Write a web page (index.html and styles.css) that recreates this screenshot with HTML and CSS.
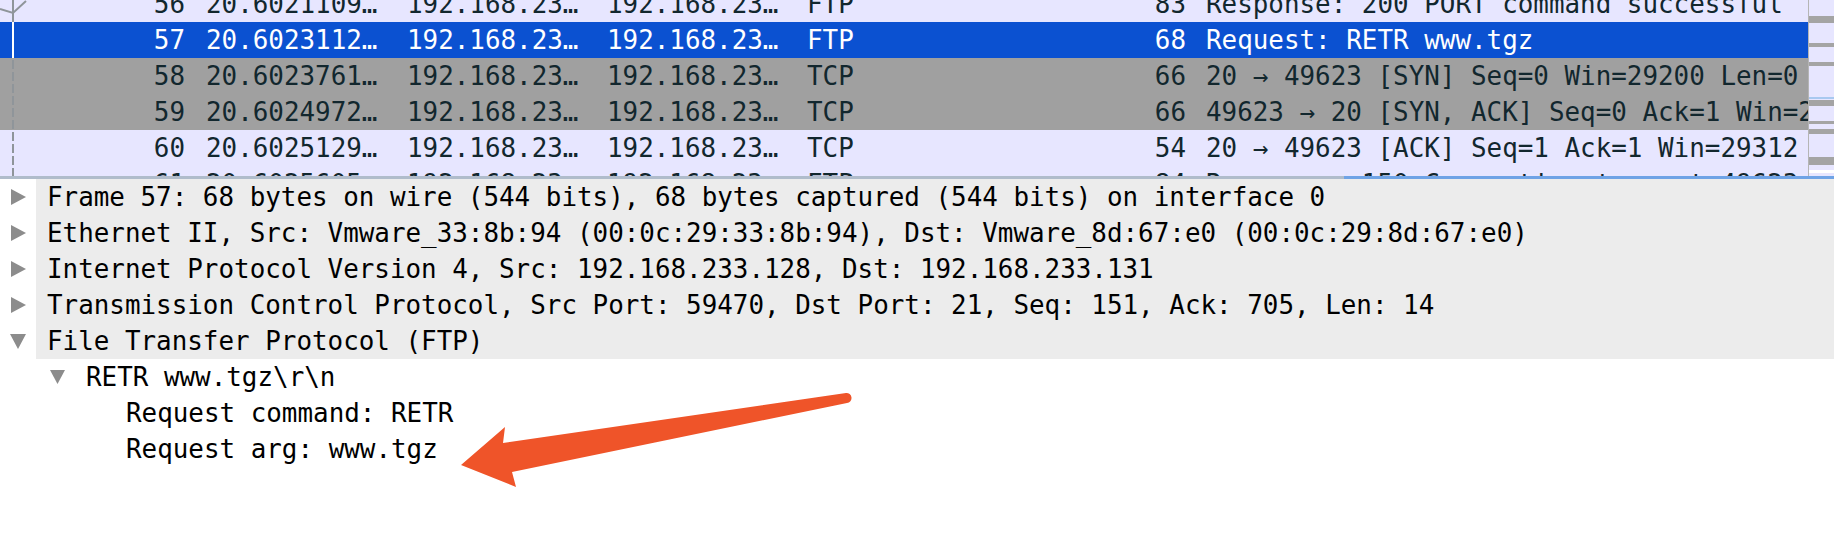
FILE: index.html
```html
<!DOCTYPE html>
<html>
<head>
<meta charset="utf-8">
<link rel="stylesheet" href="styles.css">
</head>
<body>
<div class="app">
  <div class="plist">
    <div class="plist-view">
      <div class="rows">
        <div class="row tcp"><span class="c no">56</span><span class="c time">20.6021109…</span><span class="c src">192.168.23…</span><span class="c dst">192.168.23…</span><span class="c proto">FTP</span><span class="c len">83</span><span class="c info">Response: 200 PORT command successful</span></div>
        <div class="row sel"><span class="c no">57</span><span class="c time">20.6023112…</span><span class="c src">192.168.23…</span><span class="c dst">192.168.23…</span><span class="c proto">FTP</span><span class="c len">68</span><span class="c info">Request: RETR www.tgz</span></div>
        <div class="row syn"><span class="c no">58</span><span class="c time">20.6023761…</span><span class="c src">192.168.23…</span><span class="c dst">192.168.23…</span><span class="c proto">TCP</span><span class="c len">66</span><span class="c info">20 → 49623 [SYN] Seq=0 Win=29200 Len=0 MSS=1460 SACK_PERM=1 WS=128</span></div>
        <div class="row syn"><span class="c no">59</span><span class="c time">20.6024972…</span><span class="c src">192.168.23…</span><span class="c dst">192.168.23…</span><span class="c proto">TCP</span><span class="c len">66</span><span class="c info">49623 → 20 [SYN, ACK] Seq=0 Ack=1 Win=29200 Len=0 MSS=1460</span></div>
        <div class="row tcp"><span class="c no">60</span><span class="c time">20.6025129…</span><span class="c src">192.168.23…</span><span class="c dst">192.168.23…</span><span class="c proto">TCP</span><span class="c len">54</span><span class="c info">20 → 49623 [ACK] Seq=1 Ack=1 Win=29312 Len=0</span></div>
        <div class="row tcp"><span class="c no">61</span><span class="c time">20.6025605…</span><span class="c src">192.168.23…</span><span class="c dst">192.168.23…</span><span class="c proto">FTP</span><span class="c len">84</span><span class="c info">Response: 150 Connecting to port 49623</span></div>
      </div>
      <svg class="related" width="30" height="176" viewBox="0 0 30 176">
        <line x1="13" y1="0" x2="13" y2="22" stroke="#8f959a" stroke-width="2"/>
        <polyline points="0,9 13,13 26,1" fill="none" stroke="#8f959a" stroke-width="2"/>
        <line x1="13" y1="22" x2="13" y2="58" stroke="#ffffff" stroke-width="2"/>
        <line x1="13" y1="60" x2="13" y2="176" stroke="#8f959a" stroke-width="2" stroke-dasharray="9 3"/>
      </svg>
    </div>
    <div class="minimap">
      <svg width="25" height="176" viewBox="0 0 25 176">
        <rect x="0" y="0" width="25" height="176" fill="#e7e6ff"/>
        <rect x="0" y="16" width="25" height="7" fill="#a4a4a4"/>
        <rect x="0" y="43" width="25" height="4" fill="#a4a4a4"/>
        <rect x="0" y="62" width="25" height="4" fill="#a4a4a4"/>
        <rect x="0" y="97" width="25" height="2" fill="#a8c8f0"/>
        <rect x="0" y="100" width="25" height="6" fill="#a4a4a4"/>
        <rect x="0" y="121" width="25" height="3" fill="#a4a4a4"/>
        <rect x="0" y="129" width="25" height="5" fill="#a4a4a4"/>
        <rect x="0" y="157" width="25" height="8" fill="#a4a4a4"/>
        <rect x="0" y="170" width="25" height="3" fill="#ffffff"/>
      </svg>
    </div>
  </div>
  <div class="splitter"><div class="split-left"></div><div class="split-right"></div></div>
  <div class="tree">
    <div class="node top"><span class="twisty"><svg width="15" height="16" viewBox="0 0 15 16"><polygon points="0,0 15,8 0,16" fill="#8c8c8c"/></svg></span><span class="label">Frame 57: 68 bytes on wire (544 bits), 68 bytes captured (544 bits) on interface 0</span></div>
    <div class="node top"><span class="twisty"><svg width="15" height="16" viewBox="0 0 15 16"><polygon points="0,0 15,8 0,16" fill="#8c8c8c"/></svg></span><span class="label">Ethernet II, Src: Vmware_33:8b:94 (00:0c:29:33:8b:94), Dst: Vmware_8d:67:e0 (00:0c:29:8d:67:e0)</span></div>
    <div class="node top"><span class="twisty"><svg width="15" height="16" viewBox="0 0 15 16"><polygon points="0,0 15,8 0,16" fill="#8c8c8c"/></svg></span><span class="label">Internet Protocol Version 4, Src: 192.168.233.128, Dst: 192.168.233.131</span></div>
    <div class="node top"><span class="twisty"><svg width="15" height="16" viewBox="0 0 15 16"><polygon points="0,0 15,8 0,16" fill="#8c8c8c"/></svg></span><span class="label">Transmission Control Protocol, Src Port: 59470, Dst Port: 21, Seq: 151, Ack: 705, Len: 14</span></div>
    <div class="node top"><span class="twisty"><svg width="16" height="15" viewBox="0 0 16 15"><polygon points="0,0 16,0 8,15" fill="#8c8c8c"/></svg></span><span class="label">File Transfer Protocol (FTP)</span></div>
    <div class="node lv1"><span class="twisty"><svg width="15" height="14" viewBox="0 0 15 14"><polygon points="0,0 15,0 7.5,14" fill="#8c8c8c"/></svg></span><span class="label">RETR www.tgz\r\n</span></div>
    <div class="node lv2"><span class="twisty"></span><span class="label">Request command: RETR</span></div>
    <div class="node lv2"><span class="twisty"></span><span class="label">Request arg: www.tgz</span></div>
  </div>
  <svg class="arrow" width="1834" height="544" viewBox="0 0 1834 544">
    <path d="M846,393 L503,443 L505,427 L461,465 L516,487 L512,472 L847,403 A5,5 0 0 0 846,393 Z" fill="#ef5429"/>
  </svg>
</div>
</body>
</html>
```

FILE: styles.css
```css
* { box-sizing: border-box; }

body {
  margin: 0;
  background: #ffffff;
  font-family: "DejaVu Sans Mono", "Liberation Mono", monospace;
  font-size: 25.9px;
}

.app {
  position: relative;
  width: 1834px;
  height: 544px;
  overflow: hidden;
  background: #ffffff;
}

.plist {
  display: flex;
  height: 176px;
}

.plist-view {
  position: relative;
  width: 1809px;
  flex: none;
  overflow: hidden;
  border-right: 1px solid #b5b5b5;
}

.minimap {
  flex: 1;
  display: flex;
}

.rows {
  margin-top: -14px;
}

.row {
  display: grid;
  grid-template-columns: 195px 202px 200px 200px 203px 196px 1fr;
  height: 36px;
  line-height: 36px;
  color: #12272e;
  white-space: nowrap;
}

.row.tcp { background: #e7e6ff; }
.row.syn { background: #a0a0a0; }
.row.sel { background: #0b51d1; color: #ffffff; }

.c {
  overflow: hidden;
  padding-left: 10px;
}

.no {
  text-align: right;
  padding-left: 0;
  padding-right: 10px;
}

.time { padding-left: 11px; }

.len {
  text-align: right;
  padding-left: 0;
  padding-right: 10px;
}

.related {
  position: absolute;
  left: 0;
  top: 0;
}

.splitter {
  display: flex;
  height: 3px;
}

.split-left {
  width: 1344px;
  background: #b0bccb;
}

.split-right {
  flex: 1;
  background: #6fa3e6;
}

.tree {
  color: #000000;
}

.node {
  display: flex;
  height: 36px;
  line-height: 36px;
  white-space: nowrap;
}

.twisty {
  width: 36px;
  flex: none;
  display: flex;
  align-items: center;
  justify-content: center;
}

.label {
  padding-left: 11px;
}

.node.top .label {
  flex: 1;
  background: #ececec;
}

.lv1 { padding-left: 39px; }
.lv2 { padding-left: 79px; }

.arrow {
  position: absolute;
  left: 0;
  top: 0;
  pointer-events: none;
}
```
